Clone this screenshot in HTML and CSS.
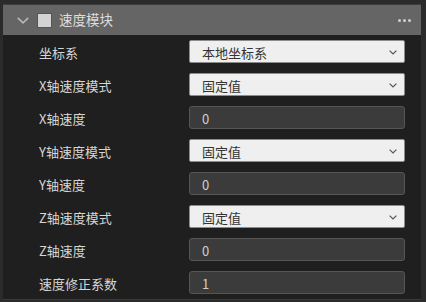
FILE: index.html
```html
<!DOCTYPE html>
<html lang="zh">
<head>
<meta charset="utf-8">
<link rel="stylesheet" href="styles.css">
</head>
<body>
<div class="panel">
  <div class="header">
    <svg class="chev" width="12" height="7" viewBox="0 0 12 7"><path d="M0.8 0.8 L6 5.8 L11.2 0.8" fill="none" stroke="#b8b8b8" stroke-width="1.6"/></svg>
    <span class="check"></span>
    <span class="title">速度模块</span>
    <span class="more"><i></i><i></i><i></i></span>
  </div>
  <div class="body">
    <div class="row"><span class="label">坐标系</span><div class="select">本地坐标系<svg width="8" height="5" viewBox="0 0 8 5"><path d="M0.6 0.6 L4 4 L7.4 0.6" fill="none" stroke="#555" stroke-width="1.2"/></svg></div></div>
    <div class="row"><span class="label">X轴速度模式</span><div class="select">固定值<svg width="8" height="5" viewBox="0 0 8 5"><path d="M0.6 0.6 L4 4 L7.4 0.6" fill="none" stroke="#555" stroke-width="1.2"/></svg></div></div>
    <div class="row"><span class="label">X轴速度</span><div class="input">0</div></div>
    <div class="row"><span class="label">Y轴速度模式</span><div class="select">固定值<svg width="8" height="5" viewBox="0 0 8 5"><path d="M0.6 0.6 L4 4 L7.4 0.6" fill="none" stroke="#555" stroke-width="1.2"/></svg></div></div>
    <div class="row"><span class="label">Y轴速度</span><div class="input">0</div></div>
    <div class="row"><span class="label">Z轴速度模式</span><div class="select">固定值<svg width="8" height="5" viewBox="0 0 8 5"><path d="M0.6 0.6 L4 4 L7.4 0.6" fill="none" stroke="#555" stroke-width="1.2"/></svg></div></div>
    <div class="row"><span class="label">Z轴速度</span><div class="input">0</div></div>
    <div class="row"><span class="label">速度修正系数</span><div class="input">1</div></div>
  </div>
</div>
</body>
</html>
```
FILE: styles.css
```css
html, body {
  margin: 0;
  background: #2b2b2b;
}
body {
  padding: 4px 5px 0 3px;
  font-family: "Noto Sans CJK SC", "Noto Sans", sans-serif;
  font-size: 13px;
}
.panel {
  width: 418px;
  border-bottom: 1px solid #3a3a3a;
}
.header {
  height: 30px;
  border-top: 1px solid #3d3d3d;
  background: #656565;
  display: flex;
  align-items: center;
  padding-left: 14px;
  padding-right: 10px;
}
.chev {
  margin-right: 8px;
  margin-top: 1px;
}
.check {
  width: 13px;
  height: 13px;
  background: #d3d3d3;
  border: 1px solid #555;
  margin-right: 7px;
}
.title {
  color: #dddddd;
  font-size: 13.5px;
  line-height: 1;
}
.more {
  margin-left: auto;
  display: flex;
  gap: 2px;
  padding-right: 0;
}
.more i {
  width: 3px;
  height: 3px;
  border-radius: 50%;
  background: #cfcfcf;
}
.body {
  background: #1f1f1f;
  padding: 5px 16px 5px 36px;
  display: flex;
  flex-direction: column;
  gap: 10px;
}
.row {
  display: flex;
  align-items: center;
  height: 23px;
}
.label {
  width: 150px;
  color: #d6d6d6;
  line-height: 1;
  padding-top: 2px;
}
.select {
  box-sizing: border-box;
  width: 216px;
  height: 23px;
  background: #efefef;
  border: 1px solid #8c8c8c;
  border-radius: 2px;
  color: #333;
  display: flex;
  align-items: center;
  justify-content: space-between;
  padding: 1px 7px 0 12px;
}
.input {
  box-sizing: border-box;
  width: 216px;
  height: 23px;
  background: #3b3b3b;
  border: 1px solid #565656;
  border-radius: 3px;
  color: #d0d0d0;
  display: flex;
  align-items: center;
  padding: 1px 0 0 12px;
}
```
